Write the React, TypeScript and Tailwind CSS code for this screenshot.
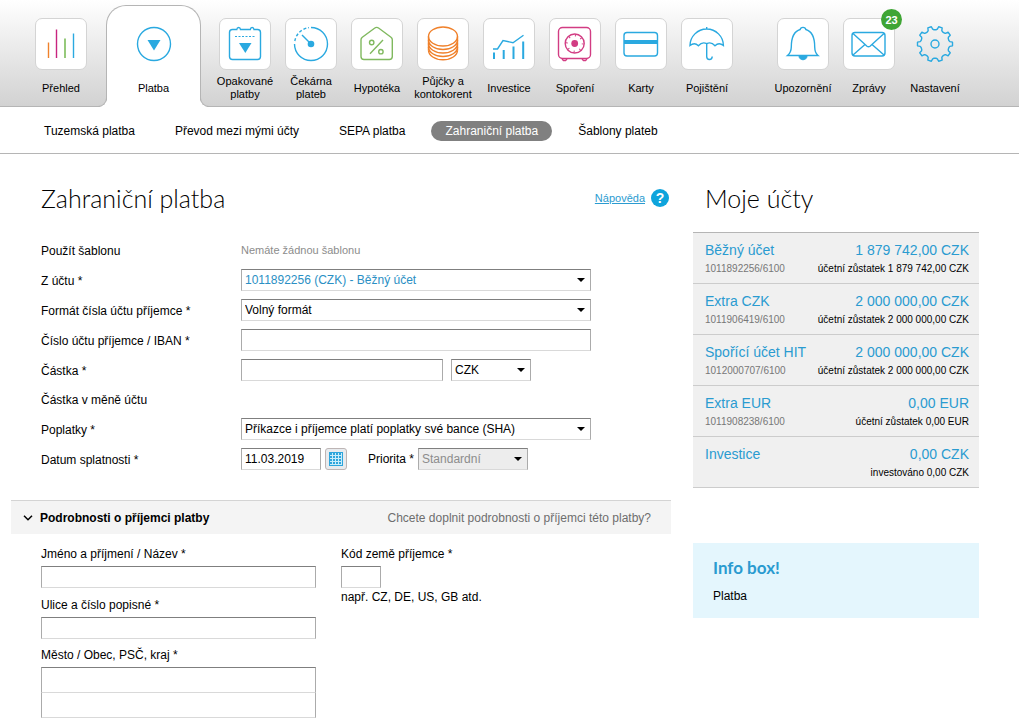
import type { ReactNode } from "react";
import clsx from "clsx";

const BLUE = "#2aa9e0";

// Gear outline: ten teeth around the centre of a 52px icon
const gearPath = (() => {
  const points: string[] = [];
  const offsets: [number, number][] = [
    [-14, 14.3],
    [-9, 15],
    [-6, 17.6],
    [6, 17.6],
    [9, 15],
    [14, 14.3],
  ];
  for (let i = 0; i < 10; i++) {
    for (const [offset, radius] of offsets) {
      const angle = ((i * 36 + offset) * Math.PI) / 180;
      const x = 26 + radius * Math.cos(angle);
      const y = 26 + radius * Math.sin(angle);
      points.push(`${x.toFixed(2)} ${y.toFixed(2)}`);
    }
  }
  return `M${points.join("L")}Z`;
})();

const icons: Record<string, ReactNode> = {
  overview: (
    <>
      <path d="M13.5 24.5V40" stroke="#f0812b" />
      <path d="M21.5 11.5V40" stroke="#c8247f" />
      <path d="M30 20.5V40" stroke="#6ab344" />
      <path d="M38.5 15.5V40" stroke={BLUE} />
    </>
  ),
  payment: (
    <>
      <circle cx="26" cy="26" r="16.5" />
      <path d="M19.5 22h13L26 32.5z" fill={BLUE} stroke="none" />
    </>
  ),
  repeated: (
    <>
      <path d="M13.5 11.5h4.3c.3-2.6 3.4-2.6 3.7 0h9.8c.3-2.6 3.4-2.6 3.7 0h3.5q3 0 3 3v24q0 3-3 3h-25q-3 0-3-3v-24q0-3 3-3z" />
      <path d="M16 18.5h21" strokeDasharray="2 1.5" strokeWidth="1" />
      <path d="M20 25h12.5l-6.2 10z" fill={BLUE} stroke="none" />
    </>
  ),
  waiting: (
    <>
      <path d="M26 9.5A16.5 16.5 0 1 1 9.5 26" />
      <path d="M9.8 23A16.5 16.5 0 0 1 24 9.6" strokeDasharray="3 2" />
      <path d="M17 17l9 9" />
      <circle cx="26" cy="26" r="3.3" fill={BLUE} stroke="none" />
    </>
  ),
  mortgage: (
    <g stroke="#80b95f">
      <path d="M23.5 10.2q2.2-1.6 4.4 0L40 19.2q1.3 1 1.3 2.5V38.5q0 3-3 3H13q-3 0-3-3V21.7q0-1.5 1.3-2.5z" />
      <circle cx="20.7" cy="24.5" r="2.2" />
      <circle cx="29.9" cy="33.7" r="2.2" />
      <path d="M32 22L19 35.7" />
    </g>
  ),
  loans: (
    <g stroke="#f0812b">
      <ellipse cx="26" cy="18.5" rx="14.5" ry="9.5" />
      <path d="M11.5 18.5v13.8M40.5 18.5v13.8" />
      <path d="M11.5 22a14.5 9.5 0 0 0 29 0M11.5 25.5a14.5 9.5 0 0 0 29 0M11.5 29a14.5 9.5 0 0 0 29 0M11.5 32.3a14.5 9.5 0 0 0 29 0" />
    </g>
  ),
  invest: (
    <>
      <path d="M10 31h4.5l5.5-8.5L30 24.7l10.5-7.5" />
      <path d="M11 34.5V41M20.7 32v9M30.5 28.5V41M40.2 23.5V41" strokeWidth="2" />
    </>
  ),
  saving: (
    <g stroke="#d23c83">
      <rect x="9.5" y="9.5" width="32" height="31" rx="4" />
      <path d="M13 41l1.5 1.5h2L18 41M33 41l1.5 1.5h2L38 41" />
      <circle cx="25.7" cy="25.5" r="9.5" />
      <circle cx="25.7" cy="25.5" r="8" strokeWidth="2" strokeDasharray="1 5.28" />
      <circle cx="25.7" cy="25.5" r="3.4" fill="#d23c83" stroke="none" />
    </g>
  ),
  cards: (
    <>
      <rect x="9" y="14.5" width="33.5" height="23.5" rx="3" />
      <path d="M9 22h33.5v4H9z" fill={BLUE} stroke="none" />
    </>
  ),
  insurance: (
    <>
      <path d="M25.7 9v2M9 27.5C9 18.5 16.5 11 25.7 11s16.7 7.5 16.7 16.5c-3-2.3-5.7-2.3-8.4.2-2.7-3-5.6-3.4-8.3-2-2.7-1.4-5.6-1-8.3 2-2.7-2.5-5.4-2.5-8.4-.2z" />
      <path d="M25.7 25.7V38.5c0 4 5.5 4 5.5 0" />
    </>
  ),
  bell: (
    <>
      <path d="M10.5 37.5h30.5c-2.5-2-3.2-4.5-3.3-8.5 0-8.5-2-15.5-8.9-17.5-.4-2.8-5.2-2.8-5.6 0-6.9 2-8.9 9-8.9 17.5-.1 4-1.3 6.5-3.8 8.5z" />
      <path d="M22 38h8c0 5-8 5-8 0z" fill={BLUE} strokeWidth="1" />
    </>
  ),
  mail: (
    <>
      <rect x="9" y="14.5" width="33" height="23.5" rx="3" />
      <path d="M10 15.5L24 28.2q1.5 1.2 3 0L41 15.5M10 37l12-10.5M41 37L29 26.5" />
    </>
  ),
  settings: (
    <>
      <path d={gearPath} strokeLinejoin="round" />
      <circle cx="26" cy="26" r="4" />
    </>
  ),
};

type MenuItem = { label: string; icon: string; badge?: number; plain?: boolean };

const productItems: MenuItem[] = [
  { label: "Opakované platby", icon: "repeated" },
  { label: "Čekárna plateb", icon: "waiting" },
  { label: "Hypotéka", icon: "mortgage" },
  { label: "Půjčky a kontokorent", icon: "loans" },
  { label: "Investice", icon: "invest" },
  { label: "Spoření", icon: "saving" },
  { label: "Karty", icon: "cards" },
  { label: "Pojištění", icon: "insurance" },
];

const userItems: MenuItem[] = [
  { label: "Upozornění", icon: "bell" },
  { label: "Zprávy", icon: "mail", badge: 23 },
  { label: "Nastavení", icon: "settings", plain: true },
];

const subItems = [
  "Tuzemská platba",
  "Převod mezi mými účty",
  "SEPA platba",
  "Zahraniční platba",
  "Šablony plateb",
];

const accounts = [
  { name: "Běžný účet", number: "1011892256/6100", amount: "1 879 742,00 CZK", note: "účetní zůstatek 1 879 742,00 CZK" },
  { name: "Extra CZK", number: "1011906419/6100", amount: "2 000 000,00 CZK", note: "účetní zůstatek 2 000 000,00 CZK" },
  { name: "Spořící účet HIT", number: "1012000707/6100", amount: "2 000 000,00 CZK", note: "účetní zůstatek 2 000 000,00 CZK" },
  { name: "Extra EUR", number: "1011908238/6100", amount: "0,00 EUR", note: "účetní zůstatek 0,00 EUR" },
  { name: "Investice", number: "", amount: "0,00 CZK", note: "investováno 0,00 CZK" },
];

const fieldClass =
  "h-[22px] border border-t-[#7f7f7f] border-x-[#ababab] border-b-[#d9d9d9] bg-white px-[3px] text-[12px] outline-none";

function MenuLink({ item }: { item: MenuItem }) {
  return (
    <a href="#" className="flex w-[66px] shrink-0 flex-col items-center gap-[5px]">
      <span
        className={clsx(
          "relative size-[52px] rounded-[7px] border",
          item.plain ? "border-transparent" : "border-[#d4d4d4] bg-white"
        )}
      >
        <svg viewBox="1 1 50 50" className="size-full" fill="none" stroke={BLUE} strokeWidth="1.4" aria-hidden="true">
          {icons[item.icon]}
        </svg>
        {item.badge && (
          <span className="absolute -top-2.5 -right-2 flex size-[21px] items-center justify-center rounded-full bg-[#3fa535] text-[11px] font-bold text-white">
            {item.badge}
          </span>
        )}
      </span>
      <span className="flex h-[26px] items-center text-center text-[11px] leading-[13px]">{item.label}</span>
    </a>
  );
}

type SelectProps = { id: string; value: string; className: string; label?: string; disabled?: boolean };

function Select({ id, value, className, label, disabled }: SelectProps) {
  return (
    <span className={clsx("relative flex", className)}>
      <select
        id={id}
        aria-label={label}
        disabled={disabled}
        className={clsx(
          fieldClass,
          "w-full appearance-none",
          disabled && "bg-[#ededed]! text-[#8c8c8c]",
          id === "account" && "text-[#2a8fc4]"
        )}
      >
        <option>{value}</option>
      </select>
      <svg viewBox="0 0 8 4" className="pointer-events-none absolute top-[9px] right-1.5 h-1 w-2" aria-hidden="true">
        <path d="M0 0h8L4 4z" fill="#000" />
      </svg>
    </span>
  );
}

function Row({ label, htmlFor, children }: { label: string; htmlFor?: string; children?: ReactNode }) {
  const labelClass = "w-[200px] shrink-0 pt-px";
  return (
    <div className={clsx("flex items-center", children ? "h-[30px]" : "h-[29px]")}>
      {htmlFor ? (
        <label htmlFor={htmlFor} className={labelClass}>
          {label}
        </label>
      ) : (
        <span className={labelClass}>{label}</span>
      )}
      {children}
    </div>
  );
}

export default function App() {
  return (
    <div className="bg-white font-['Liberation_Sans',Arial,sans-serif] text-[12px] leading-4 text-black">
      <header className="flex border-b border-[#b5b5b5] bg-linear-to-b from-white to-[#d2d2d2] pl-7">
        <div className="pt-[18px]">
          <MenuLink item={{ label: "Přehled", icon: "overview" }} />
        </div>
        {/* active tab, flared into the page with the two corner pieces */}
        <div className="relative mr-[11px] ml-3 mt-[5px] -mb-px flex w-[95px] shrink-0 justify-center rounded-t-[20px] border border-b-0 border-[#b5b5b5] bg-white pt-3 pb-1.5 before:absolute before:bottom-0 before:-left-[10px] before:size-[10px] before:rounded-br-[9px] before:border-r before:border-b before:border-[#b5b5b5] before:shadow-[3px_3px_0_#fff] after:absolute after:-right-[10px] after:bottom-0 after:size-[10px] after:rounded-bl-[9px] after:border-b after:border-l after:border-[#b5b5b5] after:shadow-[-3px_3px_0_#fff]">
          <MenuLink item={{ label: "Platba", icon: "payment", plain: true }} />
        </div>
        <nav className="flex pt-[18px]">
          {productItems.map((item) => (
            <MenuLink key={item.label} item={item} />
          ))}
        </nav>
        <nav className="ml-[30px] flex pt-[18px]">
          {userItems.map((item) => (
            <MenuLink key={item.label} item={item} />
          ))}
        </nav>
      </header>

      <nav className="flex h-[47px] items-center gap-3 border-b border-[#b5b5b5] pt-0.5 pl-[30px]">
        {subItems.map((label) => (
          <a
            key={label}
            href="#"
            className={clsx(
              "rounded-full px-3.5 py-0.5",
              label === "Zahraniční platba" && "bg-[#808080] text-white"
            )}
          >
            {label}
          </a>
        ))}
      </nav>

      <div className="flex gap-[22px] pr-10 pl-[11px]">
        <main className="min-w-0 flex-1">
          <div className="flex items-center justify-between pt-7 pl-[30px]">
            <h1 className="font-['Lato',sans-serif] text-[25px] leading-8 font-light">Zahraniční platba</h1>
            <a href="#" className="flex items-center gap-1.5 pr-0.5 text-[11px] text-[#2a9bd0]">
              <span className="underline">Nápověda</span>
              <span className="flex size-[18px] items-center justify-center rounded-full bg-[#0ea4dc] text-[14px] font-bold text-white">
                ?
              </span>
            </a>
          </div>

          <form>
            <div className="pt-[21px] pb-[26px] pl-[30px]">
              <Row label="Použít šablonu">
                <span className="text-[11px] text-[#8c8c8c]">Nemáte žádnou šablonu</span>
              </Row>
              <Row label="Z účtu *" htmlFor="account">
                <Select id="account" value="1011892256 (CZK) - Běžný účet" className="w-[350px]" />
              </Row>
              <Row label="Formát čísla účtu příjemce *" htmlFor="format">
                <Select id="format" value="Volný formát" className="w-[350px]" />
              </Row>
              <Row label="Číslo účtu příjemce / IBAN *" htmlFor="iban">
                <input id="iban" className={clsx(fieldClass, "w-[350px]")} />
              </Row>
              <Row label="Částka *" htmlFor="amount">
                <input id="amount" className={clsx(fieldClass, "mr-2 w-[202px]")} />
                <Select id="currency" label="Měna" value="CZK" className="w-20" />
              </Row>
              <Row label="Částka v měně účtu" />
              <Row label="Poplatky *" htmlFor="fees">
                <Select id="fees" value="Příkazce i příjemce platí poplatky své bance (SHA)" className="w-[350px]" />
              </Row>
              <Row label="Datum splatnosti *" htmlFor="date">
                <input id="date" defaultValue="11.03.2019" className={clsx(fieldClass, "w-20")} />
                <button
                  type="button"
                  aria-label="Kalendář"
                  className="ml-1 flex size-[22px] items-center justify-center rounded-[3px] border border-[#bdb5b5] bg-[#e8ebee]"
                >
                  <svg viewBox="0 0 14 14" className="size-3.5" aria-hidden="true">
                    <path d="M0 0h14v14H0z" fill="#2da5dc" />
                    <path
                      d="M1 3.5h12M1 6.5h12M1 9.5h12M3.5 1v12M6.5 1v12M9.5 1v12M1 12.5h12M12.5 1v12"
                      stroke="#c9ecfa"
                    />
                  </svg>
                </button>
                <label htmlFor="priority" className="mr-1 ml-[21px]">
                  Priorita *
                </label>
                <Select id="priority" value="Standardní" className="w-[110px]" disabled />
              </Row>
            </div>

            <div className="flex h-[34px] items-center justify-between border-t border-[#d4d4d4] bg-[#f4f4f4] pr-5 pl-3">
              <button type="button" className="flex items-center gap-[7px] font-bold">
                <svg viewBox="0 0 10 6" className="h-1.5 w-2.5" fill="none" stroke="#000" strokeWidth="1.5" aria-hidden="true">
                  <path d="M1 0.7l4 4 4-4" />
                </svg>
                Podrobnosti o příjemci platby
              </button>
              <span className="text-[#6e6e6e]">Chcete doplnit podrobnosti o příjemci této platby?</span>
            </div>

            <div className="flex gap-[25px] pt-3 pb-2 pl-[30px]">
              <div className="flex w-[275px] flex-col">
                <label htmlFor="name">Jméno a příjmení / Název *</label>
                <input id="name" className={clsx(fieldClass, "mt-1 mb-[9px]")} />
                <label htmlFor="street">Ulice a číslo popisné *</label>
                <input id="street" className={clsx(fieldClass, "mt-1 mb-2")} />
                <label htmlFor="city">Město / Obec, PSČ, kraj *</label>
                <input id="city" className={clsx(fieldClass, "mt-1 h-[26px]!")} />
                <input aria-label="Kraj" className={clsx(fieldClass, "h-[25px]! border-t-0")} />
              </div>
              <div className="flex flex-col items-start">
                <label htmlFor="country">Kód země příjemce *</label>
                <input id="country" className={clsx(fieldClass, "mt-1 w-10")} />
                <span className="pt-px">např. CZ, DE, US, GB atd.</span>
              </div>
            </div>
          </form>
        </main>

        <aside className="w-[286px] shrink-0 pt-7">
          <h2 className="pl-3 font-['Lato',sans-serif] text-[25px] leading-8 font-light">Moje účty</h2>
          <ul className="mt-[18px] border-t border-[#b5b5b5] bg-[#f0f0f0]">
            {accounts.map((account) => (
              <li key={account.name} className="flex h-[51px] justify-between border-b border-[#cccccc] pt-2 pr-2.5 pl-3">
                <div>
                  <a href="#" className="block text-[14px] leading-[18px] text-[#2a9bd0]">
                    {account.name}
                  </a>
                  <p className="text-[10px] leading-5 text-[#777777]">{account.number}</p>
                </div>
                <div className="text-right">
                  <p className="text-[14px] leading-[18px] text-[#2a9bd0]">{account.amount}</p>
                  <p className="text-[10px] leading-5">{account.note}</p>
                </div>
              </li>
            ))}
          </ul>
          <section className="mt-[55px] bg-[#e4f6fd] px-5 pt-[15px] pb-[14px]">
            <h3 className="font-['Lato',sans-serif] text-[17px] leading-5 font-bold text-[#2a9bd0]">Info box!</h3>
            <p className="pt-2.5">Platba</p>
          </section>
        </aside>
      </div>
    </div>
  );
}
